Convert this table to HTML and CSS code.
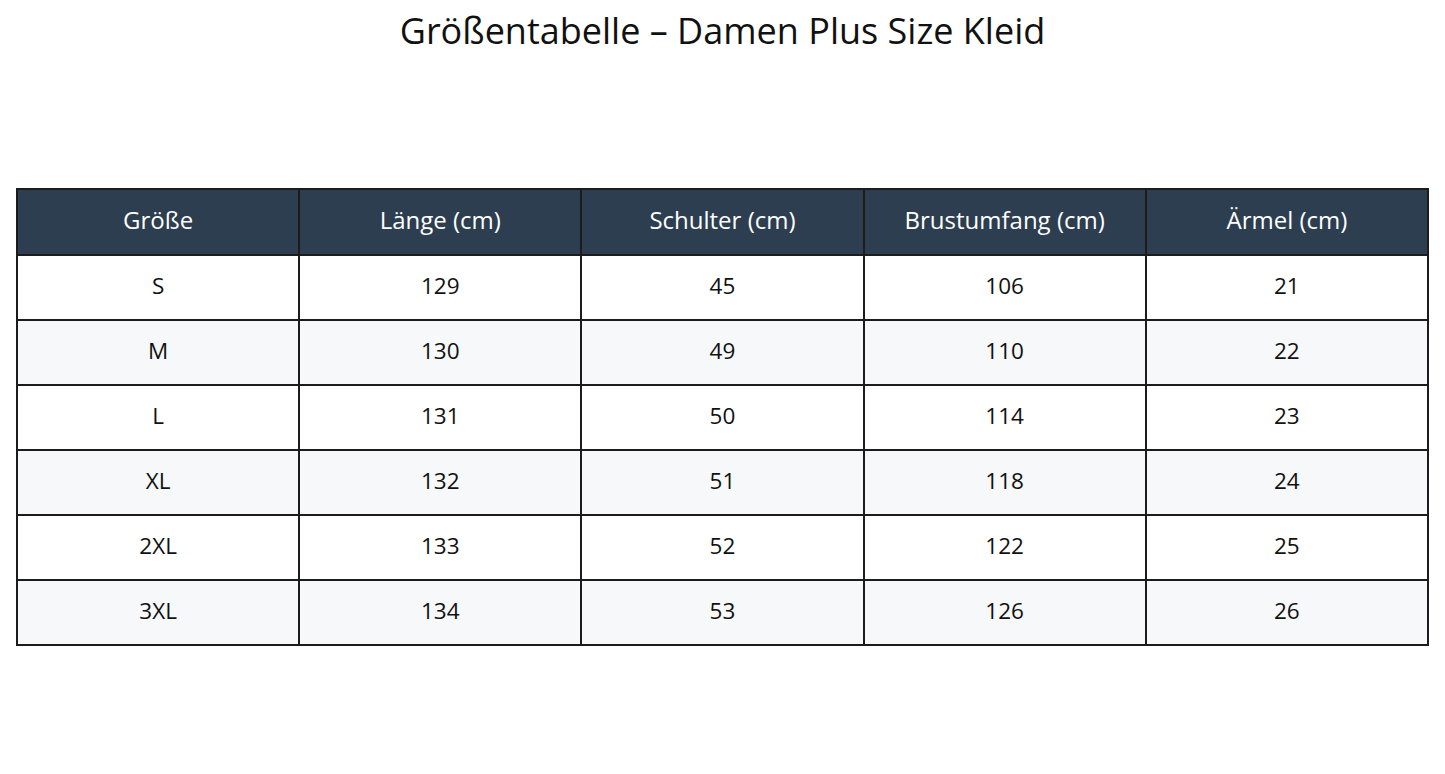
FILE: index.html
```html
<!DOCTYPE html>
<html lang="de">
<head>
<meta charset="utf-8">
<title>Größentabelle – Damen Plus Size Kleid</title>
<link rel="stylesheet" href="styles.css">
</head>
<body>
<main class="page">
  <h1 class="title">Größentabelle – Damen Plus Size Kleid</h1>
  <table class="size-table">
    <thead>
      <tr>
        <th>Größe</th>
        <th>Länge (cm)</th>
        <th>Schulter (cm)</th>
        <th>Brustumfang (cm)</th>
        <th>Ärmel (cm)</th>
      </tr>
    </thead>
    <tbody>
      <tr><td>S</td><td>129</td><td>45</td><td>106</td><td>21</td></tr>
      <tr><td>M</td><td>130</td><td>49</td><td>110</td><td>22</td></tr>
      <tr><td>L</td><td>131</td><td>50</td><td>114</td><td>23</td></tr>
      <tr><td>XL</td><td>132</td><td>51</td><td>118</td><td>24</td></tr>
      <tr><td>2XL</td><td>133</td><td>52</td><td>122</td><td>25</td></tr>
      <tr><td>3XL</td><td>134</td><td>53</td><td>126</td><td>26</td></tr>
    </tbody>
  </table>
</main>
</body>
</html>
```

FILE: styles.css
```css
html, body {
  margin: 0;
  padding: 0;
  background: #ffffff;
}

body {
  font-family: "Open Sans", Roboto, "Liberation Sans", sans-serif;
  color: #111111;
}

.page {
  padding: 11px 16px 0;
}

.title {
  margin: 0;
  font-size: 36px;
  line-height: 40px;
  font-weight: 400;
  text-align: center;
  color: #111111;
}

.size-table {
  width: 100%;
  margin-top: 137px;
  border-collapse: collapse;
  table-layout: fixed;
  font-size: 22.5px;
  line-height: 26px;
}

.size-table th,
.size-table td {
  border: 2px solid #1c1c1c;
  text-align: center;
  vertical-align: middle;
  padding: 0 0 4px;
  font-weight: 400;
}

.size-table th {
  height: 60px;
  font-size: 24px;
  background: #2c3e50;
  color: #ffffff;
}

.size-table td {
  height: 59px;
  color: #111111;
}

.size-table tbody tr:nth-child(even) td {
  background: #f7f8fa;
}
```
